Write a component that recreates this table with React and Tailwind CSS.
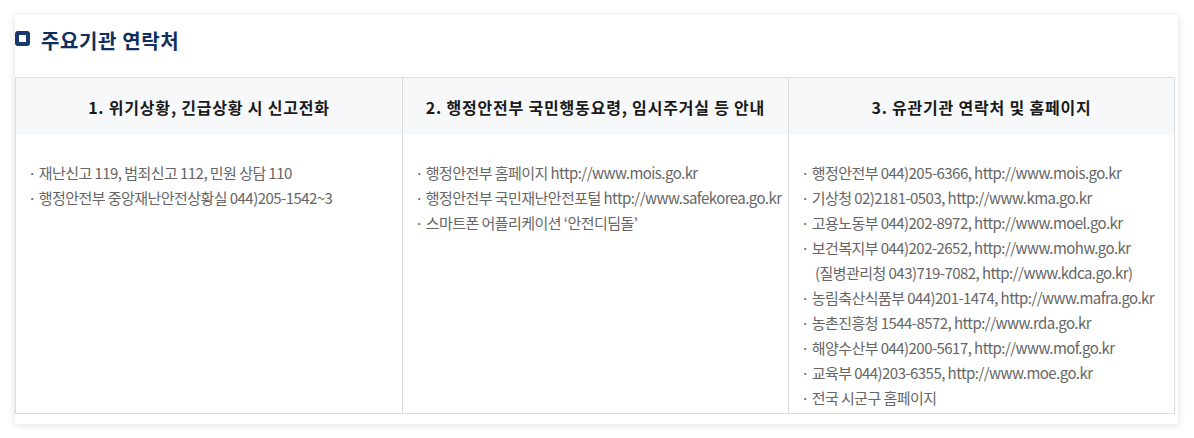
import React from 'react';

const columns = [
  {
    title: '1. 위기상황, 긴급상황 시 신고전화',
    items: ['재난신고 119, 범죄신고 112, 민원 상담 110', '행정안전부 중앙재난안전상황실 044)205-1542~3'],
  },
  {
    title: '2. 행정안전부 국민행동요령, 임시주거실 등 안내',
    items: [
      '행정안전부 홈페이지 http://www.mois.go.kr',
      '행정안전부 국민재난안전포털 http://www.safekorea.go.kr',
      '스마트폰 어플리케이션 ‘안전디딤돌’',
    ],
  },
  {
    title: '3. 유관기관 연락처 및 홈페이지',
    items: [
      '행정안전부 044)205-6366, http://www.mois.go.kr',
      '기상청 02)2181-0503, http://www.kma.go.kr',
      '고용노동부 044)202-8972, http://www.moel.go.kr',
      '보건복지부 044)202-2652, http://www.mohw.go.kr',
      { sub: '(질병관리청 043)719-7082, http://www.kdca.go.kr)' },
      '농림축산식품부 044)201-1474, http://www.mafra.go.kr',
      '농촌진흥청 1544-8572, http://www.rda.go.kr',
      '해양수산부 044)200-5617, http://www.mof.go.kr',
      '교육부 044)203-6355, http://www.moe.go.kr',
      '전국 시군구 홈페이지',
    ],
  },
];

export default function App() {
  return (
    <div
      className="min-h-[438px] w-[1194px] bg-white pl-[15px] pr-[16px] pt-[15px]"
      style={{ fontFamily: '"Noto Sans CJK KR", "Noto Sans", sans-serif' }}
    >
      <section className="bg-white pb-[10px] shadow-[0_1px_8px_rgba(0,0,0,0.12)]">
        {/* Heading */}
        <div className="flex h-[62px] items-start pt-[14px]">
          <span className="mt-[2px] h-[15px] w-[15px] rounded-[3px] border-[4px] border-[#173a6c] bg-white" />
          <h2 className="ml-[11px] text-[20px] font-bold leading-[24px] tracking-[0.6px] text-[#102f5c]">
            주요기관 연락처
          </h2>
        </div>

        {/* Table */}
        <div className="mr-[3px] grid grid-cols-3 border border-[#dcdcdc]">
          {columns.map((col, i) => (
            <div key={i} className={i > 0 ? 'border-l border-[#dcdcdc]' : ''}>
              <div className="flex h-[57px] items-center justify-center bg-[#f7f8fa] text-[16px] font-bold tracking-[0.8px] text-[#1a1a1a]">
                {col.title}
              </div>
              <ul className="pl-[12px] pr-[10px] pb-[3px] pt-[25px] text-[15px] leading-[25px] tracking-[-0.55px] text-[#666]">
                {col.items.map((item, j) =>
                  typeof item === 'string' ? (
                    <li key={j} className="whitespace-nowrap">
                      · {item}
                    </li>
                  ) : (
                    <li key={j} className="whitespace-nowrap pl-[14px]">
                      {item.sub}
                    </li>
                  )
                )}
              </ul>
            </div>
          ))}
        </div>
      </section>
    </div>
  );
}
